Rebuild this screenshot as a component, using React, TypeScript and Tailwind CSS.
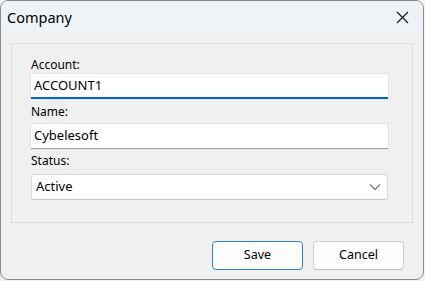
const App = () => {
  return (
    <div className="w-[425px] h-[281px] bg-[#f3f3f3] font-['Segoe_UI','Noto_Sans',sans-serif]">
      <div className="w-[424px] h-[280px] flex flex-col rounded-[8px] border border-[#8a8a8a] bg-[#f0f0f0] overflow-hidden">
        {/* Title bar */}
        <div className="h-[33px] shrink-0 flex items-center justify-between bg-[#eef3f8] pl-[6px] pr-[14px]">
          <span className="text-[14.5px] text-black">Company</span>
          <svg width="13" height="13" viewBox="0 0 13 13" className="text-[#1a1a1a]">
            <path d="M1 1 L12 12 M12 1 L1 12" stroke="currentColor" strokeWidth="1.2" fill="none" />
          </svg>
        </div>

        {/* Body */}
        <div className="flex-1 flex flex-col px-[10px] pt-[9px]">
          <div className="h-[180px] border border-[#dcdcdc] pl-[19px] pr-[24px] pt-[13px] flex flex-col text-[12px] text-black">
            <label className="leading-[16px] h-[17px]">Account:</label>
            <div className="h-[25px] bg-white border-b-2 border-[#0067c0] shadow-[0_0_0_1px_#e5e5e5] flex items-center px-[3px] text-[13px]">
              ACCOUNT1
            </div>
            <label className="leading-[16px] mt-[5px] h-[20px]">Name:</label>
            <div className="h-[25px] bg-white border-b border-[#a0a0a0] shadow-[0_0_0_1px_#e5e5e5] flex items-center px-[3px] text-[13px]">
              Cybelesoft
            </div>
            <label className="leading-[16px] mt-[4px] h-[21px]">Status:</label>
            <div className="h-[26px] bg-white border border-[#dadada] border-b-[#c8c8c8] rounded-[3px] flex items-center justify-between pl-[4px] pr-[6px] text-[13px]">
              <span>Active</span>
              <svg width="12" height="8" viewBox="0 0 12 8">
                <path d="M1 1.5 L6 6.5 L11 1.5" stroke="#6b6b6b" strokeWidth="1.1" fill="none" />
              </svg>
            </div>
          </div>

          {/* Buttons */}
          <div className="flex justify-end gap-[10px] mt-[18px] pr-[9px]">
            <button className="w-[91px] h-[29px] bg-[#fdfdfd] border border-[#2f7fd0] rounded-[4px] text-[12.5px] text-black">
              Save
            </button>
            <button className="w-[91px] h-[29px] bg-[#fdfdfd] border border-[#d0d0d0] border-b-[#bdbdbd] rounded-[4px] text-[12.5px] text-black">
              Cancel
            </button>
          </div>
        </div>
      </div>
    </div>
  );
};

export default App;
